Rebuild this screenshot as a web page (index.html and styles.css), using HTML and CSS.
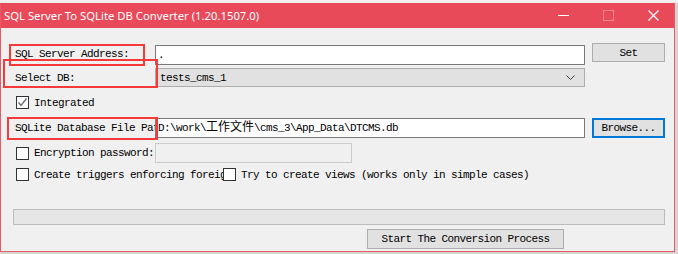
FILE: index.html
```html
<!DOCTYPE html>
<html lang="en">
<head>
    <meta charset="UTF-8">
    <title>SQL Server To SQLite DB Converter</title>
    <link rel="stylesheet" href="styles.css">
</head>
<body>

<div class="desk-top"></div>

<div class="window">
    <div class="titlebar">
        <span class="title">SQL Server To SQLite DB Converter (1.20.1507.0)</span>
        <div class="title-buttons">
            <svg width="11" height="11" viewBox="0 0 11 11"><path d="M0 5.5H11" stroke="#fff" stroke-width="1"/></svg>
            <svg width="11" height="11" viewBox="0 0 11 11"><rect x="0.5" y="0.5" width="10" height="10" fill="none" stroke="#f5888f" stroke-width="1"/></svg>
            <svg width="11" height="11" viewBox="0 0 11 11"><path d="M0.5 0.5L10.5 10.5M10.5 0.5L0.5 10.5" stroke="#fff" stroke-width="1.2"/></svg>
        </div>
    </div>

    <div class="client">
        <div class="row row-address">
            <label class="field-label">SQL Server Address:</label>
            <div class="textbox">.</div>
            <button class="btn">Set</button>
        </div>

        <div class="row row-db">
            <label class="field-label">Select DB:</label>
            <div class="combo">
                <span>tests_cms_1</span>
                <svg width="9" height="5" viewBox="0 0 9 5"><path d="M0.5 0.5L4.5 4.5L8.5 0.5" fill="none" stroke="#404040" stroke-width="1"/></svg>
            </div>
        </div>

        <div class="row row-check">
            <span class="checkbox checked">
                <svg width="11" height="11" viewBox="0 0 11 11"><path d="M1.5 5.5L4 8.5L9.5 1.5" fill="none" stroke="#6d6d7a" stroke-width="1.4"/></svg>
            </span>
            <span class="check-label">Integrated</span>
        </div>

        <div class="row row-path">
            <label class="field-label">SQLite Database File Path:</label>
            <div class="textbox">D:\work\<span class="cjk">工作文件</span>\cms_3\App_Data\DTCMS.db</div>
            <button class="btn btn-focus">Browse...</button>
        </div>

        <div class="row row-password">
            <span class="checkbox"></span>
            <span class="check-label password-label">Encryption password:</span>
            <div class="textbox disabled"></div>
        </div>

        <div class="row row-options">
            <div class="option-first">
                <span class="checkbox"></span>
                <span class="check-label">Create triggers enforcing foreign keys</span>
            </div>
            <span class="checkbox"></span>
            <span class="check-label">Try to create views (works only in simple cases)</span>
        </div>

        <div class="progress"></div>

        <button class="btn btn-start">Start The Conversion Process</button>

        <div class="mark mark-address"></div>
        <div class="mark mark-db"></div>
        <div class="mark mark-path"></div>
    </div>
</div>

</body>
</html>
```

FILE: styles.css
```css
body {
    margin: 0;
    padding: 0;
    width: 678px;
    height: 254px;
    overflow: hidden;
    background: #d6d3d3;
    font-family: "Liberation Mono", "Noto Sans CJK SC", monospace;
    font-size: 11px;
    letter-spacing: -0.6px;
    color: #000;
}

.desk-top {
    height: 3px;
    background: #f2eeee;
}

.window {
    width: 673px;
    height: 248px;
    border: 1px solid #e85a66;
    border-top: none;
    background: #f0f0f0;
}

.titlebar {
    height: 25px;
    background: #e84a5a;
    display: flex;
    align-items: center;
    justify-content: space-between;
}

.title {
    font-family: "Noto Sans", sans-serif;
    font-size: 11.3px;
    letter-spacing: 0;
    color: #fff;
    padding-left: 3px;
}

.title-buttons {
    display: flex;
    gap: 34px;
    padding-right: 15px;
}

.client {
    position: relative;
    height: 223px;
    padding-top: 15px;
    box-sizing: border-box;
}

.row {
    display: flex;
    align-items: center;
}

.field-label {
    width: 140px;
    padding-left: 14px;
    white-space: nowrap;
    overflow: hidden;
}

.textbox {
    width: 426px;
    height: 18px;
    line-height: 18px;
    border: 1px solid #7a7a7a;
    background: #fff;
    padding-left: 2px;
    box-sizing: content-box;
    white-space: nowrap;
}

.cjk {
    font-size: 12px;
    letter-spacing: 0;
}

.textbox.disabled {
    width: 195px;
    border-color: #cccccc;
    background: #f0f0f0;
    padding-left: 0;
}

.btn {
    font-family: inherit;
    font-size: 11px;
    letter-spacing: -0.6px;
    height: 19px;
    padding: 0;
    margin: 0 0 0 7px;
    width: 73px;
    background: #e1e1e1;
    border: 1px solid #adadad;
    color: #000;
}

.row-address {
    height: 21px;
}

.row-address .textbox {
    margin-top: 2px;
}

.row-address .btn {
    align-self: flex-start;
}

.row-db {
    margin-top: 4px;
    height: 19px;
}

.combo {
    height: 17px;
    border: 1px solid #adadad;
    background: #e1e1e1;
    display: flex;
    align-items: center;
    justify-content: space-between;
    padding: 0 9px 0 4px;
    box-sizing: content-box;
    width: 415px;
}

.row-check {
    margin-top: 8px;
    height: 15px;
    padding-left: 15px;
}

.checkbox {
    width: 11px;
    height: 11px;
    border: 1px solid #333;
    background: #fff;
    display: inline-flex;
    align-items: center;
    justify-content: center;
    flex-shrink: 0;
}

.check-label {
    margin-left: 5px;
    white-space: nowrap;
}

.row-path {
    margin-top: 8px;
    height: 20px;
}

.btn-focus {
    border: 2px solid #0078d7;
    height: 20px;
}

.row-password {
    margin-top: 5px;
    height: 20px;
    padding-left: 15px;
}

.password-label {
    width: 121px;
    overflow: hidden;
}

.row-options {
    margin-top: 4px;
    height: 15px;
    padding-left: 15px;
}

.option-first {
    width: 207px;
    display: flex;
    align-items: center;
    overflow: hidden;
}

.progress {
    margin: 27px 0 0 12px;
    width: 650px;
    height: 14px;
    background: #e6e6e6;
    border: 1px solid #bcbcbc;
}

.btn-start {
    display: block;
    margin: 4px 0 0 366px;
    width: 197px;
    height: 20px;
}

.mark {
    position: absolute;
    border: 2px solid #f53a3a;
    box-sizing: border-box;
}

.mark-address {
    left: 8px;
    top: 16px;
    width: 136px;
    height: 22px;
}

.mark-db {
    left: 2px;
    top: 31px;
    width: 155px;
    height: 29px;
}

.mark-path {
    left: 6px;
    top: 89px;
    width: 151px;
    height: 23px;
}
```
